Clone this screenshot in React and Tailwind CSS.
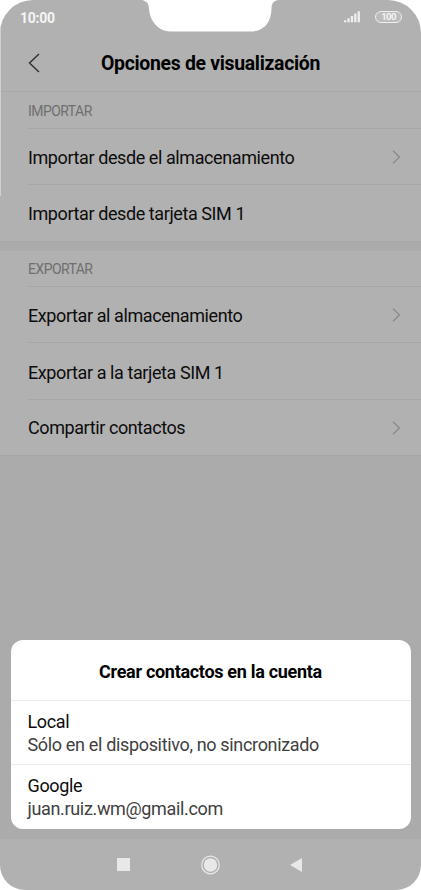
function Chevron() {
  return (
    <svg className="mr-5 h-[14px] w-[9px]" viewBox="0 0 9 14" fill="none" stroke="#888888" strokeWidth="1.2">
      <path d="M1 0.7 L7.5 7 L1 13.3" />
    </svg>
  );
}

function Row({ label, chevron, last, className = "h-[56px]" }) {
  return (
    <div className={`ml-7 flex items-center justify-between ${last ? "flex-1" : `shrink-0 border-b border-[#a7a7a7] ${className}`}`}>
      <span className={`${last ? "pt-px" : "pt-[3px]"} text-[18px] leading-6 tracking-[-0.41px] text-[#0c0c0c]`}>{label}</span>
      {chevron && <Chevron />}
    </div>
  );
}

function SectionTitle({ children, className }) {
  return (
    <div className={`ml-7 flex shrink-0 items-center border-b border-[#a7a7a7] text-[14px] tracking-[-0.55px] text-[#6f6f6f] ${className}`}>
      <span>{children}</span>
    </div>
  );
}

function Account({ name, detail }) {
  return (
    <div className="flex h-16 flex-col border-t border-[#ececec] pt-[9px] pl-[17px] text-[18px] leading-[23px] tracking-[-0.34px]">
      <span className="text-[#0c0c0c]">{name}</span>
      <span className="text-[#404040]">{detail}</span>
    </div>
  );
}

export default function App() {
  return (
    <div className="h-[890px] w-[421px] overflow-hidden bg-white font-[Roboto,sans-serif]">
      <div className="relative flex h-[890px] w-[421px] flex-col overflow-hidden rounded-t-[33px] rounded-b-[25px] bg-[#b1b1b1]">
        <div className="absolute top-0 left-0 h-[196px] w-px bg-[#d0d0d0]" />
        <svg className="absolute top-0 left-[142px] h-8 w-[136px]" viewBox="0 0 136 32" fill="#fff">
          <path d="M0 0 C5 1 7 4 7 9 C8 21 16 31 28 31.5 H111 C123 30 129 22 129.5 9 C129.5 4 131 1 136 0 Z" />
        </svg>

        <header className="flex h-[92px] shrink-0 flex-col border-b border-[#a8a8a8]">
          <div className="flex h-[34px] items-center justify-between pr-[19px] pl-[20px]">
            <span className="pt-[2px] text-[14px] font-bold tracking-[-0.25px] text-[#f5f5f5]">10:00</span>
            <div className="flex items-center gap-[15px]">
              <svg className="h-3 w-4" viewBox="0 0 16 12" fill="#f0f0f0">
                <rect x="0" y="9.3" width="2.3" height="2" />
                <rect x="3.4" y="7.3" width="2.3" height="4" />
                <rect x="6.8" y="5" width="2.3" height="6.3" />
                <rect x="10.2" y="2.6" width="2.3" height="8.7" />
                <rect x="13.6" y="0.3" width="2.3" height="11" />
              </svg>
              <div className="flex h-[12px] w-[27px] items-center justify-center rounded-full border border-[#eeeeee] bg-[#bcbcbc] text-[9.5px] leading-none font-bold tracking-[-0.6px] text-[#f5f5f5]">
                100
              </div>
            </div>
          </div>
          <div className="grid h-[57px] grid-cols-[100px_1fr_100px] items-center">
            <svg className="ml-7 h-[20px] w-[12px]" viewBox="0 0 12 20" fill="none" stroke="#303030" strokeWidth="1.4">
              <path d="M11 1 L1.5 10 L11 19" />
            </svg>
            <h1 className="pt-[2px] text-center text-[19.4px] font-bold tracking-[-0.3px] whitespace-nowrap text-black">Opciones de visualización</h1>
          </div>
        </header>

        <section className="flex h-[150px] shrink-0 flex-col border-b border-[#a8a8a8]">
          <SectionTitle className="h-[37px] pt-[2px]">IMPORTAR</SectionTitle>
          <Row label="Importar desde el almacenamiento" chevron />
          <Row label="Importar desde tarjeta SIM 1" last />
        </section>
        <div className="h-[9px] shrink-0 bg-[#ababab]" />
        <section className="flex h-[205px] shrink-0 flex-col border-b border-[#a6a6a6]">
          <SectionTitle className="h-[36px] pt-px">EXPORTAR</SectionTitle>
          <Row label="Exportar al almacenamiento" chevron />
          <Row label="Exportar a la tarjeta SIM 1" className="h-[57px]" />
          <Row label="Compartir contactos" chevron last />
        </section>

        <main className="flex flex-1 flex-col justify-end bg-[#ababab] px-[10.5px] pb-[10px]">
          <div className="h-[189px] overflow-hidden rounded-[12px] bg-white">
            <h2 className="flex h-[60px] items-center justify-center pt-[2px] text-[18px] font-bold tracking-[-0.3px] text-black">
              Crear contactos en la cuenta
            </h2>
            <Account name="Local" detail="Sólo en el dispositivo, no sincronizado" />
            <Account name="Google" detail="juan.ruiz.wm@gmail.com" />
          </div>
        </main>

        <nav className="flex h-[51px] shrink-0 items-center pl-[117px]">
          <div className="h-[13px] w-[13px] bg-[#e8e8e8]" />
          <svg className="ml-[71px] h-5 w-5" viewBox="0 0 20 20">
            <circle cx="9.5" cy="10" r="8.8" fill="none" stroke="#e8e8e8" strokeWidth="1.2" />
            <circle cx="9.5" cy="10" r="6.7" fill="#e8e8e8" />
          </svg>
          <svg className="ml-[69px] h-[14px] w-3" viewBox="0 0 12 14" fill="#e8e8e8">
            <path d="M12 0 V14 L0 7 Z" />
          </svg>
        </nav>
      </div>
    </div>
  );
}
